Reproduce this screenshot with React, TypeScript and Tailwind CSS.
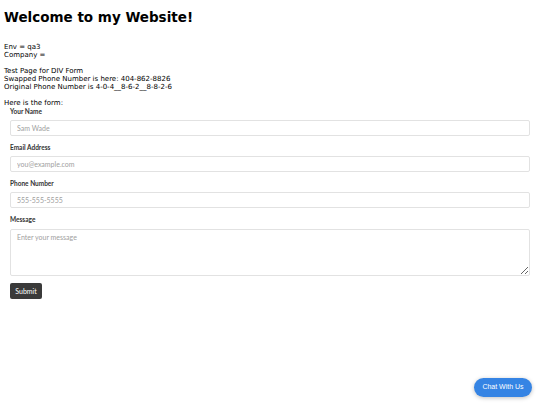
export default function App() {
  const dv = { fontFamily: '"DejaVu Sans", sans-serif' };
  const lato = { fontFamily: 'Lato, "Open Sans", sans-serif' };
  const inputCls =
    "mb-[8px] box-border block h-[16px] w-full rounded-[2px] border border-[#e2e2e2] px-[6px] text-[7px] placeholder-[#a0a0a0] outline-none";
  const labelCls = "mb-[4px] block text-[6.5px] font-bold leading-[8px] text-[#333]";
  return (
    <div className="relative h-[405px] w-[540px] overflow-hidden bg-white text-black">
      <div className="px-[4px]" style={dv}>
        <h1 className="pt-[9px] text-[13.5px] font-bold leading-[17px]">Welcome to my Website!</h1>
        <div className="mt-[17px] text-[7px] leading-[8px]">
          <div>Env = qa3</div>
          <div>Company =</div>
          <div className="h-[8px]" />
          <div>Test Page for DIV Form</div>
          <div>Swapped Phone Number is here: 404-862-8826</div>
          <div>Original Phone Number is 4-0-4__8-6-2__8-8-2-6</div>
          <div className="h-[8px]" />
          <div>Here is the form:</div>
        </div>
      </div>
      <form className="flex flex-col px-[10px] pt-[1px]" style={lato}>
        <label className={labelCls}>Your Name</label>
        <input className={inputCls} placeholder="Sam Wade" />
        <label className={labelCls}>Email Address</label>
        <input className={inputCls} placeholder="you@example.com" />
        <label className={labelCls}>Phone Number</label>
        <input className={inputCls} placeholder="555-555-5555" />
        <label className="mb-[5px] block text-[6.5px] font-bold leading-[8px] text-[#333]">Message</label>
        <textarea
          className="mb-[7px] box-border block h-[47px] w-full resize-y rounded-[2px] border border-[#e2e2e2] px-[6px] py-[3px] text-[7px] leading-[9px] placeholder-[#a0a0a0] outline-none"
          placeholder="Enter your message"
        />
        <div className="flex">
          <button
            type="button"
            className="box-border h-[16px] w-[32px] rounded-[2px] bg-[#3a3a3a] text-[7px] text-white"
          >
            Submit
          </button>
        </div>
      </form>
      <button
        type="button"
        className="absolute left-[474px] top-[378px] flex h-[19px] w-[58px] items-center justify-center rounded-full bg-[#3584e4] text-[7px] text-white shadow-[0_1px_4px_rgba(0,0,0,0.25)]"
        style={{ fontFamily: '"Liberation Sans", Arial, sans-serif' }}
      >
        Chat With Us
      </button>
    </div>
  );
}
